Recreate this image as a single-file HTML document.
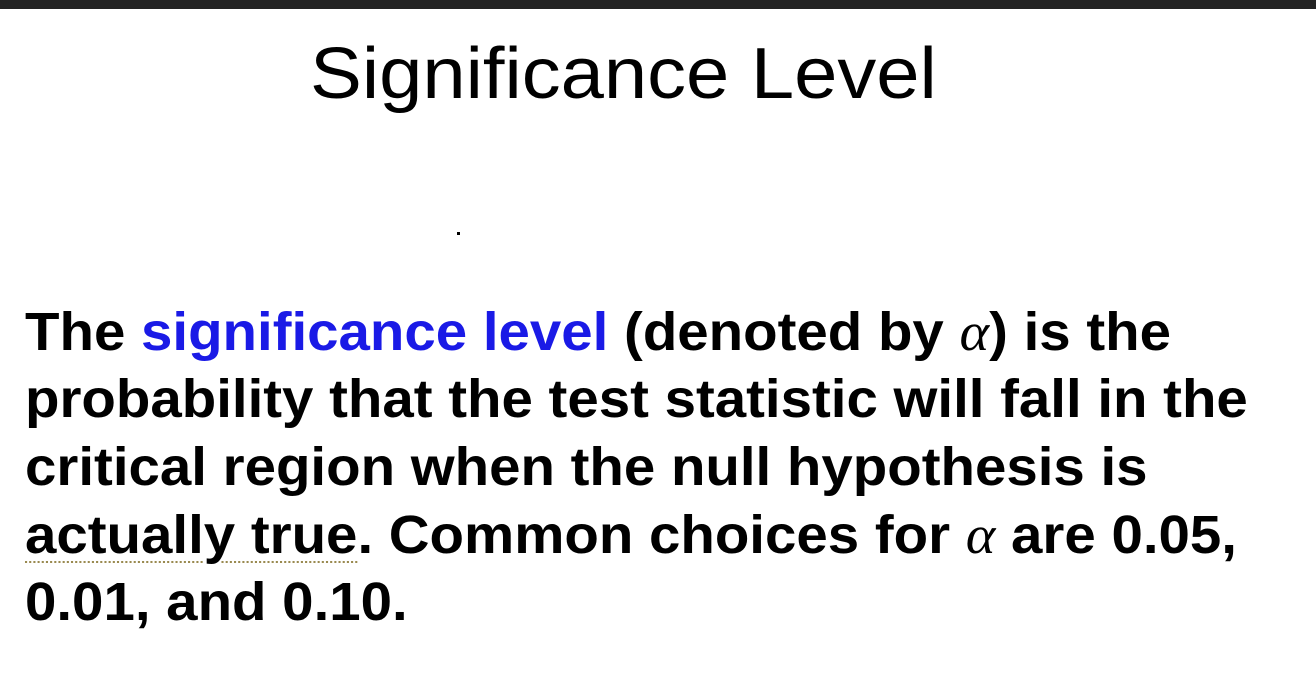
<!DOCTYPE html>
<html><head><meta charset="utf-8"><style>
html,body{margin:0;padding:0;background:#fff;width:1316px;height:679px;overflow:hidden;position:relative}
.bar{position:absolute;left:0;top:0;width:1316px;height:9px;background:#232323}
.title{position:absolute;left:310px;top:34px;font-family:"Liberation Sans",sans-serif;font-size:72px;line-height:80px;color:#000;white-space:nowrap;transform:scaleX(1.08);transform-origin:left top}
.l{position:absolute;left:25px;font-family:"Liberation Sans",sans-serif;font-weight:bold;font-size:54px;line-height:60px;color:#000;white-space:nowrap;transform:scaleX(1.045);transform-origin:left top}
.b{color:#1a1ae6}
.a{font-family:"Liberation Serif",serif;font-style:italic;font-weight:normal}
.u{text-decoration:underline dotted #9a8a50;text-underline-offset:8px;text-decoration-thickness:2px}
.dot{position:absolute;left:457px;top:232px;width:3px;height:3px;background:#000}
</style></head><body>
<div class="bar"></div>
<div class="title">Significance Level</div>
<div class="dot"></div>
<div class="l" style="top:302px">The <span class="b">significance level</span> (denoted by <span class="a">α</span>) is the</div>
<div class="l" style="top:369px">probability that the test statistic will fall in the</div>
<div class="l" style="top:437px">critical region when the null hypothesis is</div>
<div class="l" style="top:505px"><span class="u">actually true</span>. Common choices for <span class="a">α</span> are 0.05,</div>
<div class="l" style="top:572px">0.01, and 0.10.</div>
</body></html>
